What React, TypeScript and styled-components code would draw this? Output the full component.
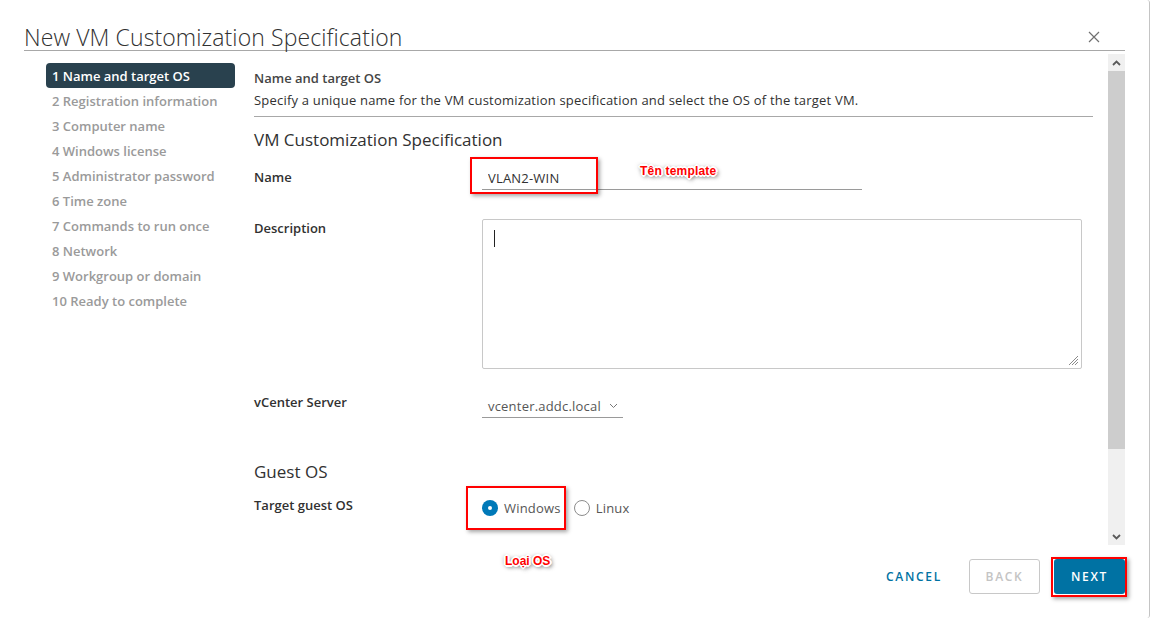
import React from 'react';
import styled, { createGlobalStyle } from 'styled-components';

const GlobalStyle = createGlobalStyle`
  html, body {
    margin: 0;
    padding: 0;
    background: #ffffff;
  }
  body {
    font-family: "Open Sans", "Liberation Sans", Arial, sans-serif;
    color: #313131;
  }
`;

const Dialog = styled.div`
  position: relative;
  width: 1150px;
  height: 618px;
  box-sizing: border-box;
  padding: 0 24px;
  background: #fff;
  border-right: 1px solid #c4c4c4;
  border-radius: 3px;
  display: flex;
  flex-direction: column;
`;

const Header = styled.div`
  height: 51px;
  flex-shrink: 0;
  border-bottom: 1px solid #a8a8a8;
  display: flex;
  align-items: center;
  justify-content: space-between;
  box-sizing: border-box;
  padding-top: 24px;
`;

const Title = styled.h1`
  margin: 0;
  font-size: 23px;
  font-weight: 300;
  color: #313131;
  letter-spacing: 0.1px;
`;

const CloseButton = styled.button`
  border: 0;
  background: none;
  padding: 0;
  width: 14px;
  height: 14px;
  margin-right: 23px;
  margin-top: 2px;
  cursor: pointer;
  display: flex;
`;

const Body = styled.div`
  flex: 1;
  display: flex;
  min-height: 0;
`;

const Sidebar = styled.nav`
  width: 218px;
  flex-shrink: 0;
  padding: 12px 7px 0 22px;
  box-sizing: border-box;
  display: flex;
  flex-direction: column;
`;

const Step = styled.div<{ $active?: boolean }>`
  height: 25px;
  display: flex;
  align-items: center;
  padding-left: 6px;
  border-radius: 4px;
  font-size: 13px;
  font-weight: 600;
  color: ${(p) => (p.$active ? '#ffffff' : '#9a9a9a')};
  background: ${(p) => (p.$active ? '#29414e' : 'transparent')};
`;

const Pane = styled.div`
  flex: 1;
  display: flex;
  margin-top: 3px;
  height: 491px;
  overflow: hidden;
`;

const Content = styled.div`
  flex: 1;
  padding: 15px 15px 0 12px;
  overflow: hidden;
  letter-spacing: 0.2px;
`;

const PageTitle = styled.div`
  font-size: 13px;
  font-weight: 600;
  line-height: 18px;
  color: #454545;
  letter-spacing: 0;
`;

const PageDesc = styled.div`
  font-size: 13px;
  line-height: 18px;
  margin-top: 4px;
  padding-bottom: 7px;
  border-bottom: 1px solid #a8a8a8;
  color: #313131;
`;

const SectionTitle = styled.h2<{ $top: number }>`
  margin: ${(p) => p.$top}px 0 0;
  font-size: 17px;
  font-weight: 400;
  line-height: 24px;
  color: #313131;
  letter-spacing: 0;
`;

const Row = styled.div<{ $top: number }>`
  display: grid;
  grid-template-columns: 228px 1fr;
  align-items: start;
  margin-top: ${(p) => p.$top}px;
`;

const Label = styled.div<{ $pad?: number }>`
  font-size: 13px;
  font-weight: 600;
  line-height: 18px;
  color: #313131;
  letter-spacing: 0;
  padding-top: ${(p) => p.$pad ?? 0}px;
`;

const Field = styled.div`
  position: relative;
  display: flex;
  align-items: center;
`;

const TextInput = styled.input`
  width: 380px;
  height: 25px;
  box-sizing: border-box;
  border: 0;
  border-bottom: 1px solid #9a9a9a;
  padding: 1px 6px 0;
  font-family: inherit;
  font-size: 13px;
  letter-spacing: 0.2px;
  color: #313131;
  outline: none;
  background: transparent;
`;

const TextArea = styled.div`
  position: relative;
  width: 600px;
  height: 150px;
  box-sizing: border-box;
  border: 1px solid #c8c8c8;
  border-radius: 2px;
`;

const Caret = styled.span`
  position: absolute;
  left: 11px;
  top: 10px;
  width: 1px;
  height: 17px;
  background: #222;
`;

const Grip = styled.svg`
  position: absolute;
  right: 2px;
  bottom: 2px;
`;

const Select = styled.div`
  width: 141px;
  height: 23px;
  margin-top: 3px;
  box-sizing: border-box;
  border-bottom: 1px solid #9a9a9a;
  display: flex;
  align-items: center;
  padding-left: 6px;
  gap: 8px;
  font-size: 13px;
  color: #565656;
`;

const RadioGroup = styled.div`
  display: flex;
  align-items: center;
  gap: 13px;
  padding-top: 3px;
`;

const RadioOption = styled.label`
  display: flex;
  align-items: center;
  gap: 6px;
  font-size: 13px;
  color: #565656;
`;

const RadioDot = styled.span<{ $checked?: boolean }>`
  width: 16px;
  height: 16px;
  box-sizing: border-box;
  border-radius: 50%;
  display: flex;
  align-items: center;
  justify-content: center;
  border: ${(p) => (p.$checked ? '0' : '1px solid #8c8c8c')};
  background: ${(p) => (p.$checked ? '#0079b8' : '#fff')};
  &::after {
    content: '';
    display: ${(p) => (p.$checked ? 'block' : 'none')};
    width: 4px;
    height: 4px;
    border-radius: 50%;
    background: #fff;
  }
`;

const Scrollbar = styled.div`
  width: 17px;
  flex-shrink: 0;
  display: flex;
  flex-direction: column;
  background: #f0f0f0;
`;

const ScrollArrow = styled.div`
  height: 17px;
  display: flex;
  align-items: center;
  justify-content: center;
  background: #f0f0f0;
`;

const ScrollThumb = styled.div`
  height: 378px;
  background: #cdcdcd;
`;

const ScrollTrack = styled.div`
  flex: 1;
`;

const Footer = styled.div`
  position: relative;
  height: 72px;
  flex-shrink: 0;
  display: flex;
  align-items: center;
  justify-content: flex-end;
  gap: 14px;
  padding-bottom: 12px;
  box-sizing: border-box;
`;

const Button = styled.button<{ $variant: 'flat' | 'outline' | 'primary' }>`
  height: 35px;
  min-width: 71px;
  box-sizing: border-box;
  padding: 0 12px;
  border-radius: 3px;
  font-family: inherit;
  font-size: 12px;
  font-weight: 600;
  letter-spacing: 1.7px;
  text-transform: uppercase;
  cursor: pointer;
  color: ${(p) =>
    p.$variant === 'primary' ? '#fff' : p.$variant === 'flat' ? '#0072a3' : '#c4c4c4'};
  background: ${(p) => (p.$variant === 'primary' ? '#0072a3' : 'transparent')};
  border: ${(p) => (p.$variant === 'outline' ? '1px solid #c8c8c8' : '0')};
  margin-right: ${(p) => (p.$variant === 'flat' ? '1px' : '0')};
`;

/* screenshot annotations drawn over the dialog */
const Mark = styled.div`
  position: absolute;
  border: 2px solid #ff0000;
  box-shadow: 2px 2px 4px rgba(0, 0, 0, 0.35);
  pointer-events: none;
`;

const Note = styled.span`
  position: absolute;
  font-family: "Liberation Sans", Arial, sans-serif;
  font-size: 12px;
  font-weight: 700;
  color: #ff0000;
  white-space: nowrap;
  text-shadow: -1px -1px 0 #fff, 1px -1px 0 #fff, -1px 1px 0 #fff, 1px 1px 0 #fff,
    0 -2px 0 #fff, 0 2px 0 #fff, -2px 0 0 #fff, 2px 0 0 #fff, 2px 2px 4px rgba(0, 0, 0, 0.8),
    -1px 0 4px rgba(0, 0, 0, 0.5);
`;

const steps = [
  '1 Name and target OS',
  '2 Registration information',
  '3 Computer name',
  '4 Windows license',
  '5 Administrator password',
  '6 Time zone',
  '7 Commands to run once',
  '8 Network',
  '9 Workgroup or domain',
  '10 Ready to complete',
];

function Chevron({ up, thin }: { up?: boolean; thin?: boolean }) {
  return (
    <svg width="9" height="6" viewBox="0 0 9 6">
      <path
        d={up ? 'M1 5 L4.5 1.5 L8 5' : 'M1 1 L4.5 4.5 L8 1'}
        fill="none"
        stroke={thin ? '#777' : '#5a5a5a'}
        strokeWidth={thin ? 1 : 1.8}
      />
    </svg>
  );
}

export default function App() {
  return (
    <>
      <GlobalStyle />
      <Dialog>
        <Header>
          <Title>New VM Customization Specification</Title>
          <CloseButton aria-label="Close">
            <svg width="12" height="12" viewBox="0 0 12 12">
              <path d="M1 1 L11 11 M11 1 L1 11" stroke="#707070" strokeWidth="1.2" />
            </svg>
          </CloseButton>
        </Header>

        <Body>
          <Sidebar>
            {steps.map((s, i) => (
              <Step key={s} $active={i === 0}>
                {s}
              </Step>
            ))}
          </Sidebar>

          <Pane>
            <Content>
              <PageTitle>Name and target OS</PageTitle>
              <PageDesc>
                Specify a unique name for the VM customization specification and select the OS of the target VM.
              </PageDesc>

              <SectionTitle $top={11}>VM Customization Specification</SectionTitle>

              <Row $top={13}>
                <Label $pad={3}>Name</Label>
                <Field>
                  <TextInput defaultValue="VLAN2-WIN" />
                  <Mark style={{ left: -12, top: -8, width: 124, height: 33 }} />
                  <Note style={{ left: 158, top: -1 }}>Tên template</Note>
                </Field>
              </Row>

              <Row $top={29}>
                <Label $pad={0}>Description</Label>
                <TextArea>
                  <Caret />
                  <Grip width="12" height="12" viewBox="0 0 12 12">
                    <path d="M11 2 L2 11 M11 5 L5 11 M11 8 L8 11" stroke="#8a8a8a" strokeWidth="1" />
                  </Grip>
                </TextArea>
              </Row>

              <Row $top={23}>
                <Label $pad={1}>vCenter Server</Label>
                <Select>
                  vcenter.addc.local
                  <Chevron thin />
                </Select>
              </Row>

              <SectionTitle $top={42}>Guest OS</SectionTitle>

              <Row $top={12}>
                <Label>Target guest OS</Label>
                <Field>
                  <RadioGroup>
                    <RadioOption>
                      <RadioDot $checked />
                      Windows
                    </RadioOption>
                    <RadioOption>
                      <RadioDot />
                      Linux
                    </RadioOption>
                  </RadioGroup>
                  <Mark style={{ left: -16, top: -10, width: 96, height: 40 }} />
                </Field>
              </Row>
            </Content>

            <Scrollbar>
              <ScrollArrow>
                <Chevron up />
              </ScrollArrow>
              <ScrollThumb />
              <ScrollTrack />
              <ScrollArrow>
                <Chevron />
              </ScrollArrow>
            </Scrollbar>
          </Pane>
        </Body>

        <Footer>
          <Note style={{ left: 481, top: 8 }}>Loại OS</Note>
          <Button $variant="flat">Cancel</Button>
          <Button $variant="outline">Back</Button>
          <Button $variant="primary">Next</Button>
          <Mark style={{ right: -2, top: 11, width: 72, height: 36 }} />
        </Footer>
      </Dialog>
    </>
  );
}
